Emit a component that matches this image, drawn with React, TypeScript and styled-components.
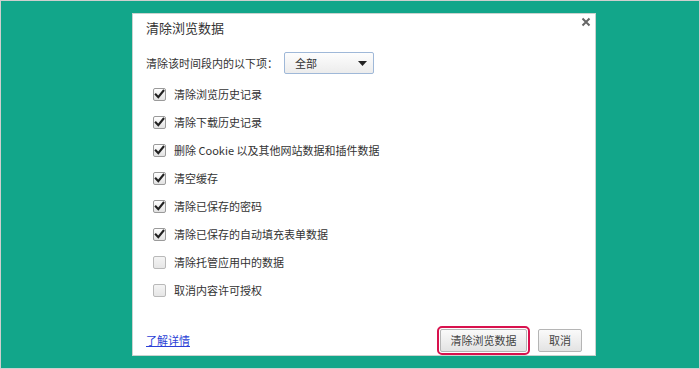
import React from "react";
import styled, { createGlobalStyle, css } from "styled-components";

const Global = createGlobalStyle`
  html, body { margin: 0; padding: 0; background: #ffffff; }
  body { font-family: "Noto Sans CJK SC", "Noto Sans", sans-serif; }
`;

const Stage = styled.div`
  width: 700px;
  height: 369px;
  box-sizing: border-box;
  border: 1px solid #cfcfcf;
  background: #12a68a;
  padding: 12px 0 0 131px;
`;

const Dialog = styled.div`
  width: 464px;
  height: 343px;
  box-sizing: border-box;
  background: #ffffff;
  border: 1px solid #c9d3cf;
  display: flex;
  flex-direction: column;
  padding: 0 13px 1px 13px;
  color: #333;
`;

const Header = styled.div`
  height: 30px;
  display: flex;
  justify-content: space-between;
  align-items: flex-start;
  padding-top: 5px;
  box-sizing: border-box;
`;

const Title = styled.div`
  font-size: 13px;
  line-height: 18px;
  color: #333;
`;

const Close = styled.div`
  width: 12px;
  height: 12px;
  margin-top: -3px;
  margin-right: -10px;
  display: flex;
`;

const RangeRow = styled.div`
  margin-top: 6px;
  height: 26px;
  display: flex;
  align-items: center;
  font-size: 11px;
`;

const Select = styled.div`
  margin-left: 6px;
  width: 90px;
  height: 22px;
  box-sizing: border-box;
  border: 1px solid #9fb8d8;
  border-radius: 2px;
  background: linear-gradient(#fdfdfd, #ececec);
  display: flex;
  align-items: center;
  justify-content: space-between;
  padding: 0 6px 0 10px;
  font-size: 11px;
  color: #333;
`;

const List = styled.div`
  margin-top: 4px;
  display: flex;
  flex-direction: column;
`;

const Row = styled.label`
  height: 28px;
  display: flex;
  align-items: center;
  padding-left: 7px;
  gap: 8px;
  font-size: 11px;
  color: #333;
`;

const Box = styled.span<{ $checked: boolean }>`
  width: 13px;
  height: 13px;
  box-sizing: border-box;
  border-radius: 2px;
  display: flex;
  align-items: center;
  justify-content: center;
  ${(p) =>
    p.$checked
      ? css`
          border: 1px solid #9a9a9a;
          background: linear-gradient(#ffffff, #e2e2e2);
        `
      : css`
          border: 1px solid #b9b9b9;
          background: linear-gradient(#f4f4f4, #e6e6e6);
        `}
`;

const Footer = styled.div`
  margin-top: auto;
  height: 28px;
  display: flex;
  align-items: center;
`;

const Link = styled.a`
  font-size: 11px;
  color: #2b3fd6;
  text-decoration: underline;
  cursor: pointer;
`;

const Spacer = styled.div`
  flex: 1;
`;

const Button = styled.button<{ $focused?: boolean }>`
  height: 23px;
  box-sizing: border-box;
  border: 1px solid #b5b5b5;
  border-radius: 2px;
  background: linear-gradient(#fafafa, #e3e3e3);
  font-family: "Noto Sans CJK SC", "Noto Sans", sans-serif;
  font-size: 11px;
  color: #444;
  padding: 0;
  display: flex;
  align-items: center;
  justify-content: center;
  ${(p) =>
    p.$focused &&
    css`
      outline: 2px solid #d8124e;
      outline-offset: 1px;
    `}
`;

const ClearButton = styled(Button)`
  width: 87px;
  margin-right: 11px;
`;

const CancelButton = styled(Button)`
  width: 44px;
`;

const items: { label: string; checked: boolean }[] = [
  { label: "清除浏览历史记录", checked: true },
  { label: "清除下载历史记录", checked: true },
  { label: "删除 Cookie 以及其他网站数据和插件数据", checked: true },
  { label: "清空缓存", checked: true },
  { label: "清除已保存的密码", checked: true },
  { label: "清除已保存的自动填充表单数据", checked: true },
  { label: "清除托管应用中的数据", checked: false },
  { label: "取消内容许可授权", checked: false },
];

const Check = () => (
  <svg width="11" height="11" viewBox="0 0 11 11">
    <path d="M1.8 5.6 L4.3 8.2 L9.4 1.8" fill="none" stroke="#222" strokeWidth="2.1" strokeLinecap="square" />
  </svg>
);

export default function App() {
  return (
    <>
      <Global />
      <Stage>
        <Dialog>
          <Header>
            <Title>清除浏览数据</Title>
            <Close>
              <svg width="12" height="12" viewBox="0 0 12 12">
                <path d="M2.5 2.5 L9.5 9.5 M9.5 2.5 L2.5 9.5" stroke="#666" strokeWidth="2" />
              </svg>
            </Close>
          </Header>
          <RangeRow>
            清除该时间段内的以下项：
            <Select>
              <span>全部</span>
              <svg width="9" height="5" viewBox="0 0 9 5">
                <path d="M0 0 L9 0 L4.5 5 Z" fill="#222" />
              </svg>
            </Select>
          </RangeRow>
          <List>
            {items.map((it) => (
              <Row key={it.label}>
                <Box $checked={it.checked}>{it.checked && <Check />}</Box>
                {it.label}
              </Row>
            ))}
          </List>
          <Footer>
            <Link>了解详情</Link>
            <Spacer />
            <ClearButton $focused>清除浏览数据</ClearButton>
            <CancelButton>取消</CancelButton>
          </Footer>
        </Dialog>
      </Stage>
    </>
  );
}
